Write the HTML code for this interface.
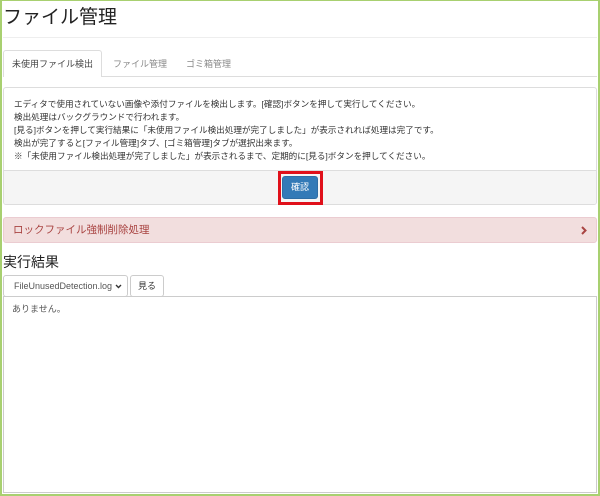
<!DOCTYPE html>
<html><head><meta charset="utf-8"><style>
*{box-sizing:border-box;margin:0;padding:0}
body{width:600px;height:496px;overflow:hidden;background:#fff;font-family:"Liberation Sans","Noto Sans CJK JP",sans-serif;color:#333;position:relative}
.a{position:absolute}
.frame{position:absolute;left:0;top:0;width:600px;height:496px;border:1px solid #a8d070;border-width:1px 2px 2px 2px;pointer-events:none;z-index:5}
</style></head><body>
<div class="frame"></div>
<div class="a" style="left:3px;top:2px;font-size:19px;color:#222">ファイル管理</div>
<div class="a" style="left:3px;top:37px;width:594px;border-top:1px solid #eee"></div>
<div class="a" style="left:3px;top:76px;width:594px;border-top:1px solid #ddd"></div>
<div class="a" style="left:3px;top:50px;width:99px;height:27px;border:1px solid #ddd;border-bottom:none;background:#fff;border-radius:3px 3px 0 0;font-size:9px;line-height:26px;text-align:center;color:#444">未使用ファイル検出</div>
<div class="a" style="left:113px;top:57px;font-size:9px;color:#888">ファイル管理</div>
<div class="a" style="left:186px;top:57px;font-size:9px;color:#888">ゴミ箱管理</div>
<div class="a" style="left:3px;top:87px;width:594px;height:118px;border:1px solid #ddd;border-radius:3px;overflow:hidden">
<div style="padding:10px 0 0 10px;font-size:8.6px;line-height:13px;color:#333">エディタで使用されていない画像や添付ファイルを検出します。[確認]ボタンを押して実行してください。<br>検出処理はバックグラウンドで行われます。<br>[見る]ボタンを押して実行結果に「未使用ファイル検出処理が完了しました」が表示されれば処理は完了です。<br>検出が完了すると[ファイル管理]タブ、[ゴミ箱管理]タブが選択出来ます。<br>※「未使用ファイル検出処理が完了しました」が表示されるまで、定期的に[見る]ボタンを押してください。</div>
<div class="a" style="left:0;top:82px;width:100%;height:36px;background:#f5f5f5;border-top:1px solid #ddd"></div>
</div>
<div class="a" style="left:278px;top:171px;width:45px;height:34px;border:3px solid #e0101a"></div>
<div class="a" style="left:282px;top:176px;width:36px;height:23px;background:#337ab7;border:1px solid #2e6da4;border-radius:3px;color:#fff;font-size:9px;line-height:21px;text-align:center">確認</div>
<div class="a" style="left:3px;top:217px;width:594px;height:26px;background:#f2dede;border:1px solid #ebccd1;border-radius:3px;color:#a94442;font-size:10.5px;line-height:24px;padding-left:9px">ロックファイル強制削除処理<svg style="position:absolute;right:9px;top:8px" width="6" height="9" viewBox="0 0 6 9"><path d="M1 1 L4.5 4.5 L1 8" stroke="#a94442" stroke-width="2" fill="none"/></svg></div>
<div class="a" style="left:3px;top:252px;font-size:14px;color:#222">実行結果</div>
<div class="a" style="left:3px;top:275px;width:125px;height:22px;border:1px solid #ccc;border-radius:3px;font-size:9px;line-height:20px;padding-left:10px;color:#555">FileUnusedDetection.log<svg style="position:absolute;right:5px;top:8px" width="7" height="5" viewBox="0 0 7 5"><path d="M1 1 L3.5 3.5 L6 1" stroke="#333" stroke-width="1.4" fill="none"/></svg></div>
<div class="a" style="left:130px;top:275px;width:34px;height:22px;border:1px solid #ccc;border-radius:3px;font-size:9px;line-height:20px;text-align:center;color:#333">見る</div>
<div class="a" style="left:3px;top:296px;width:594px;height:197px;border:1px solid #ccc;font-size:9px;padding:5px 8px;color:#555">ありません。</div>
</body></html>
